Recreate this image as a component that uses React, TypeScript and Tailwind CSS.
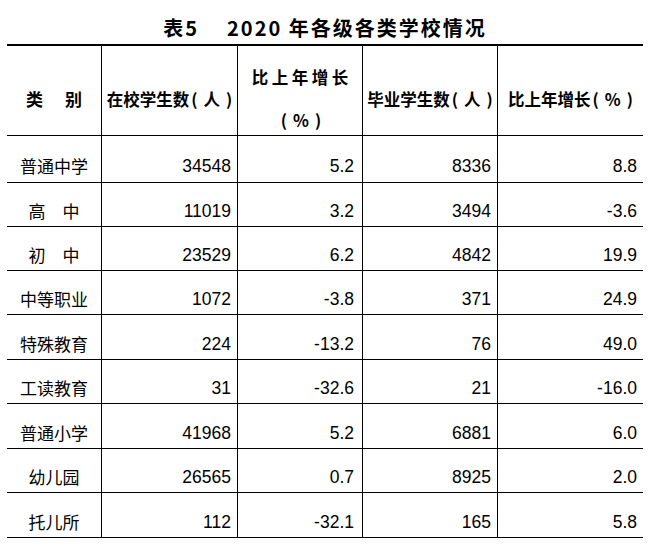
const ROWS = [
  { name: '普通中学', a: '34548', b: '5.2', c: '8336', d: '8.8', h: 'h-[47px]' },
  { name: '高　中', a: '11019', b: '3.2', c: '3494', d: '-3.6', h: 'h-[44px]' },
  { name: '初　中', a: '23529', b: '6.2', c: '4842', d: '19.9', h: 'h-[44px]' },
  { name: '中等职业', a: '1072', b: '-3.8', c: '371', d: '24.9', h: 'h-[44px]' },
  { name: '特殊教育', a: '224', b: '-13.2', c: '76', d: '49.0', h: 'h-[45px]' },
  { name: '工读教育', a: '31', b: '-32.6', c: '21', d: '-16.0', h: 'h-[44px]' },
  { name: '普通小学', a: '41968', b: '5.2', c: '6881', d: '6.0', h: 'h-[45px]' },
  { name: '幼儿园', a: '26565', b: '0.7', c: '8925', d: '2.0', h: 'h-[44px]' },
  { name: '托儿所', a: '112', b: '-32.1', c: '165', d: '5.8', h: 'h-[45px]' },
]

const CJK = 'font-["Noto_Sans_CJK_SC",sans-serif]'
const NUM = 'font-["Liberation_Sans","Noto_Sans_CJK_SC",sans-serif]'

// "( 人 )" / "( % )" with the loose spacing of the printed table
function Paren({ children }: { children: string }) {
  return (
    <span className="inline-flex items-center gap-[6px] ml-[2px]">
      <span>(</span>
      <span>{children}</span>
      <span>)</span>
    </span>
  )
}

export default function App() {
  return (
    <div className="w-[652px] h-[548px] bg-white text-black overflow-hidden">
      <div className="ml-[7px] w-[636px]">
        {/* Title */}
        <div
          className={`h-[44px] pt-[17px] flex justify-center text-[20px] leading-[22px] font-bold tracking-[2px] whitespace-nowrap ${CJK}`}
        >
          <span>表5</span>
          <span className="ml-[28px]">2020 年各级各类学校情况</span>
        </div>

        <div className="border-t-2 border-black">
          {/* Header */}
          <div className={`h-[90px] flex border-b border-black font-bold text-[16.5px] leading-[20px] whitespace-nowrap ${CJK}`}>
            <div className="w-[95px] border-r border-black pt-[16px] flex items-center justify-center gap-[22px] text-[17px]">
              <span>类</span>
              <span>别</span>
            </div>
            <div className="w-[136px] border-r border-black pt-[16px] flex items-center justify-center">
              在校学生数<Paren>人</Paren>
            </div>
            <div className="w-[125px] border-r border-black pt-[16px] flex flex-col items-center justify-center gap-[23px]">
              <span className="tracking-[3.5px] pl-[3.5px]">比上年增长</span>
              <Paren>%</Paren>
            </div>
            <div className="w-[135px] border-r border-black pt-[16px] flex items-center justify-center">
              毕业学生数<Paren>人</Paren>
            </div>
            <div className="w-[145px] pt-[16px] flex items-center justify-center">
              比上年增长<Paren>%</Paren>
            </div>
          </div>

          {/* Body */}
          {ROWS.map((r) => (
            <div key={r.name} className={`${r.h} flex border-b border-black leading-[20px]`}>
              <div className={`w-[95px] border-r border-black pt-[13px] flex items-center justify-center text-[17px] whitespace-pre ${CJK}`}>
                {r.name}
              </div>
              <div className={`w-[136px] border-r border-black pt-[13px] pr-[6px] flex items-center justify-end text-[17.5px] ${NUM}`}>
                {r.a}
              </div>
              <div className={`w-[125px] border-r border-black pt-[13px] pr-[8px] flex items-center justify-end text-[17.5px] ${NUM}`}>
                {r.b}
              </div>
              <div className={`w-[135px] border-r border-black pt-[13px] pr-[6px] flex items-center justify-end text-[17.5px] ${NUM}`}>
                {r.c}
              </div>
              <div className={`w-[145px] pt-[13px] pr-[6px] flex items-center justify-end text-[17.5px] ${NUM}`}>
                {r.d}
              </div>
            </div>
          ))}
        </div>
      </div>
    </div>
  )
}
